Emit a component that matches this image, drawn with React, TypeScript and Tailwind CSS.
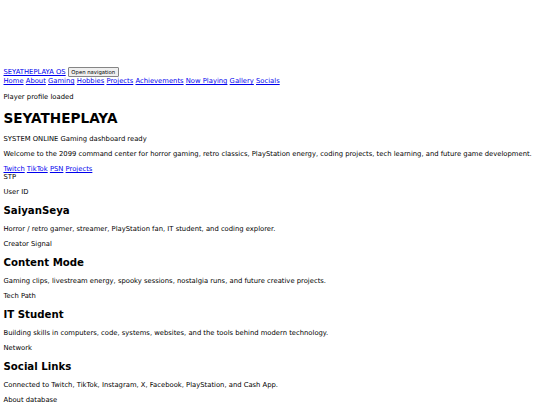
export default function App() {
  const nav = ["Home", "About", "Gaming", "Hobbies", "Projects", "Achievements", "Now Playing", "Gallery", "Socials"];
  const links = ["Twitch", "TikTok", "PSN", "Projects"];
  const sections = [
    { label: "User ID", title: "SaiyanSeya", text: "Horror / retro gamer, streamer, PlayStation fan, IT student, and coding explorer." },
    { label: "Creator Signal", title: "Content Mode", text: "Gaming clips, livestream energy, spooky sessions, nostalgia runs, and future creative projects." },
    { label: "Tech Path", title: "IT Student", text: "Building skills in computers, code, systems, websites, and the tools behind modern technology." },
    { label: "Network", title: "Social Links", text: "Connected to Twitch, TikTok, Instagram, X, Facebook, PlayStation, and Cash App." },
  ];

  return (
    <div className="min-h-[405px] bg-white px-[3.5px] text-[6.8px] leading-[8px] text-black font-['DejaVu_Sans',sans-serif]">
      <div className="h-[67px]" />
      <header>
        <div>
          <a href="#" className="text-[#0000ee] underline">SEYATHEPLAYA OS</a>{" "}
          <button className="border border-[#858585] bg-[#efefef] px-[2.5px] py-[0.5px] text-[5.3px] leading-[7px] rounded-[1px] align-middle">Open navigation</button>
        </div>
        <nav>
          {nav.map((n, i) => (
            <span key={n}>
              {i > 0 && " "}
              <a href="#" className="text-[#0000ee] underline">{n}</a>
            </span>
          ))}
        </nav>
      </header>

      <p className="mt-[8px] mb-[6.9px]">Player profile loaded</p>
      <h1 className="my-[9.2px] text-[13.6px] leading-[16px] font-bold">SEYATHEPLAYA</h1>
      <p className="my-[6.9px]">SYSTEM ONLINE Gaming dashboard ready</p>
      <p className="my-[6.9px] whitespace-nowrap">Welcome to the 2099 command center for horror gaming, retro classics, PlayStation energy, coding projects, tech learning, and future game development.</p>
      <div>
        {links.map((l, i) => (
          <span key={l}>
            {i > 0 && " "}
            <a href="#" className="text-[#0000ee] underline">{l}</a>
          </span>
        ))}
      </div>
      <div>STP</div>

      {sections.map((s) => (
        <div key={s.title}>
          <p className="my-[6.9px]">{s.label}</p>
          <h2 className="my-[8.6px] text-[10.2px] leading-[12px] font-bold">{s.title}</h2>
          <p className="my-[6.9px]">{s.text}</p>
        </div>
      ))}
      <p className="my-[6.9px]">About database</p>
    </div>
  );
}
